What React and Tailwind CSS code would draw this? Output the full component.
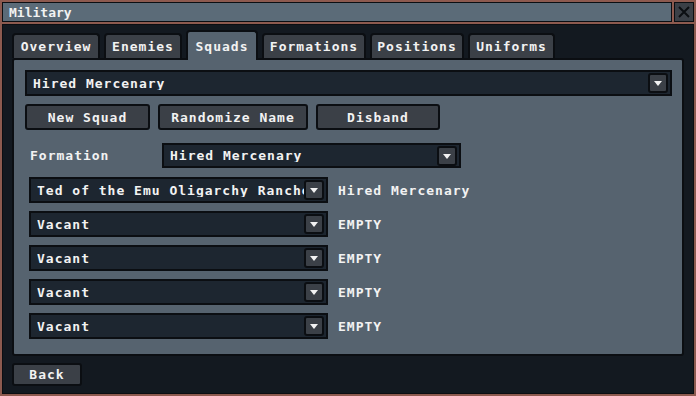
import React from "react";

const tabs = ["Overview", "Enemies", "Squads", "Formations", "Positions", "Uniforms"];
const tabWidths = ["w-[88px]", "w-[78px]", "w-[72px]", "w-[104px]", "w-[94px]", "w-[87px]"];

const members = [
  { name: "Ted of the Emu Oligarchy Ranchers", label: "Hired Mercenary" },
  { name: "Vacant", label: "EMPTY" },
  { name: "Vacant", label: "EMPTY" },
  { name: "Vacant", label: "EMPTY" },
  { name: "Vacant", label: "EMPTY" },
];

const Arrow = () => (
  <div className="absolute right-[2px] top-[1px] w-[20px] h-[20px] rounded-[3px] bg-[#3b4047] border-2 border-[#0b0e12] flex items-center justify-center">
    <svg width="8" height="5" viewBox="0 0 8 5">
      <path d="M0 0h8L4 5z" fill="#f2f2f2" />
    </svg>
  </div>
);

const Dropdown = ({ text, className }) => (
  <div
    className={`relative shrink-0 bg-[#1d2630] border-2 border-[#0b0e12] flex items-center pl-[6px] pr-[12px] ${className}`}
  >
    <span className="flex-1 overflow-hidden whitespace-nowrap">{text}</span>
    <Arrow />
  </div>
);

const Button = ({ text, className }) => (
  <button
    className={`shrink-0 bg-[#3b4047] border-2 border-[#0b0e12] rounded-[3px] flex items-center justify-center ${className}`}
  >
    {text}
  </button>
);

const App = () => {
  return (
    <div
      className="w-[696px] h-[396px] bg-[#8d5a4f] p-[2px] flex flex-col gap-[2px] text-[#f2f2f2] text-[13px] font-bold tracking-[1px] leading-none"
      style={{ fontFamily: '"DejaVu Sans Mono", monospace' }}
    >
      <div className="h-[20px] shrink-0 flex gap-[2px]">
        <div className="flex-1 bg-[#5b6b78] border border-[#0b0e12] flex items-center px-[6px] tracking-[0px]">
          Military
        </div>
        <div className="w-[20px] bg-[#3b4047] border border-[#0b0e12] flex items-center justify-center">
          <svg width="12" height="12" viewBox="0 0 12 12">
            <path d="M1 1L11 11M11 1L1 11" stroke="#0b0e12" strokeWidth="2" />
          </svg>
        </div>
      </div>

      <div className="flex-1 bg-[#131920] border border-[#0b0e12] px-[9px] pt-[4px] flex flex-col">
        <div className="flex items-end gap-[4px] h-[29px] shrink-0">
          {tabs.map((t, i) =>
            t === "Squads" ? (
              <div
                key={t}
                className={`${tabWidths[i]} h-[30px] -mb-[2px] z-10 bg-[#56636f] border-2 border-b-0 border-[#0b0e12] rounded-t-[4px] flex items-center justify-center`}
              >
                {t}
              </div>
            ) : (
              <div
                key={t}
                className={`${tabWidths[i]} h-[25px] bg-[#3b4047] border-2 border-b-0 border-[#0b0e12] rounded-t-[4px] flex items-center justify-center`}
              >
                {t}
              </div>
            )
          )}
        </div>

        <div className="w-[672px] h-[298px] shrink-0 bg-[#56636f] border-2 border-[#0b0e12] rounded-[3px] pl-[11px] pr-[10px] pt-[10px] flex flex-col">
          <Dropdown text="Hired Mercenary" className="w-full h-[26px]" />

          <div className="flex gap-[8px] mt-[8px]">
            <Button text="New Squad" className="w-[125px] h-[26px]" />
            <Button text="Randomize Name" className="w-[150px] h-[26px]" />
            <Button text="Disband" className="w-[124px] h-[26px]" />
          </div>

          <div className="flex items-center mt-[13px] pl-[5px]">
            <span className="w-[132px]">Formation</span>
            <Dropdown text="Hired Mercenary" className="w-[299px] h-[25px]" />
          </div>

          <div className="flex flex-col gap-[8px] mt-[9px] pl-[4px]">
            {members.map((m, i) => (
              <div key={i} className="flex items-center gap-[10px]">
                <Dropdown text={m.name} className="w-[299px] h-[26px]" />
                <span>{m.label}</span>
              </div>
            ))}
          </div>
        </div>

        <div className="mt-[7px]">
          <Button text="Back" className="w-[70px] h-[23px]" />
        </div>
      </div>
    </div>
  );
};

export default App;
